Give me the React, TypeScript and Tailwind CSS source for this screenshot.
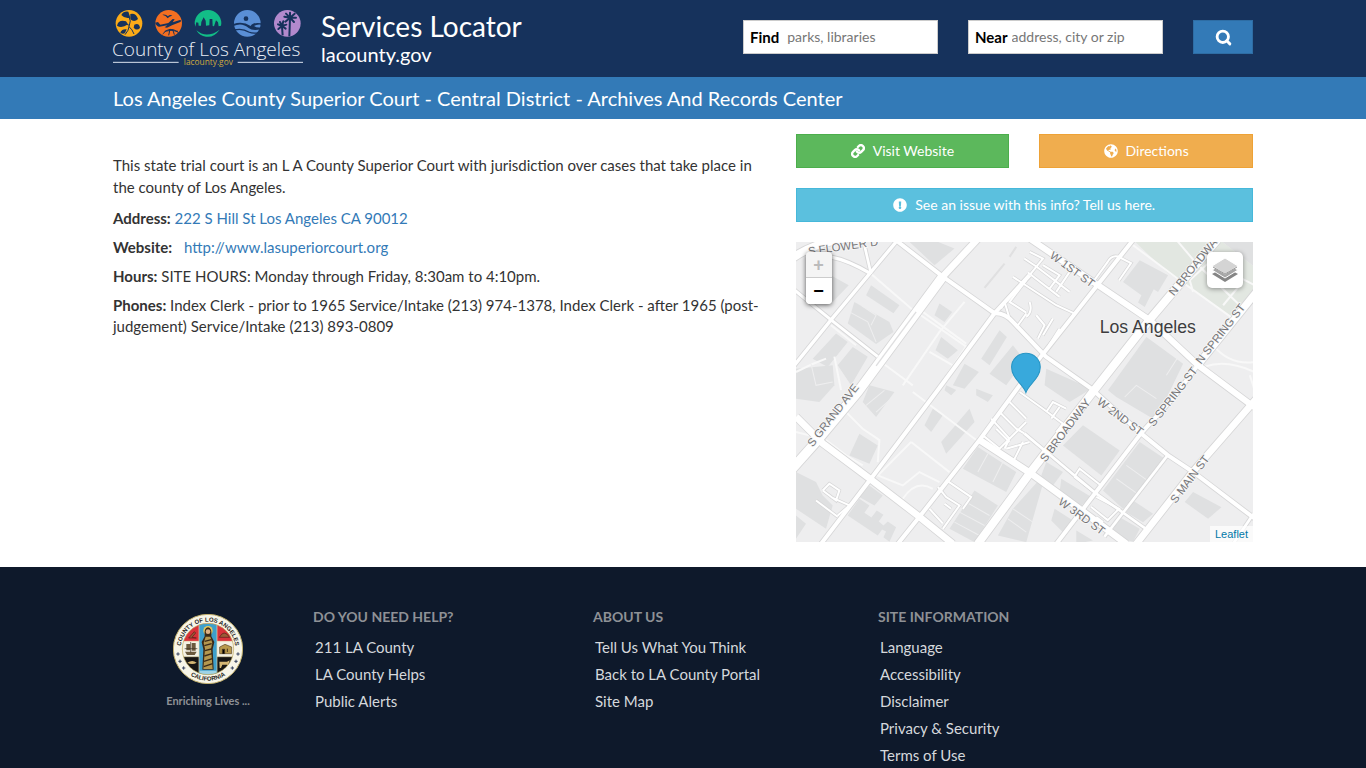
import React from "react";
import { Link as LinkIcon, Search } from "lucide-react";
import { FaGlobeAmericas, FaExclamationCircle } from "react-icons/fa";

const roads: { d: string; w: number }[] = [
  { d: "M-10 48 Q60 0 170 -14", w: 24 },
  { d: "M100 44 Q160 56 225 96", w: 10 },
  { d: "M205 10 L225 96", w: 8 },
  { d: "M305 -6 L105 234 L-5 370", w: 10 },
  { d: "M700 100 L595 214 L425 444 L225 709 L75 905", w: 12 },
  { d: "M1009 -4 L734 344 L660 444 L550 594 L370 824 L305 905", w: 12 },
  { d: "M1204 369 L1134 464 L1034 574 L780 905", w: 12 },
  { d: "M285 -16 L440 104 L595 214 Q625 212 650 240 L749 344 L884 439 L1034 574 L1114 639 L1189 689 L1374 829", w: 12 },
  { d: "M-5 144 L105 234 L245 344", w: 9 },
  { d: "M684 574 L899 754 L1054 864", w: 8 },
  { d: "M1114 639 L924 884", w: 8 },
  { d: "M1371 815 L1310 905", w: 8 },
  { d: "M0 524 L80 604 L220 709 L370 824 L470 905", w: 20 },
  { d: "M550 594 L704 694 L814 774 L990 905", w: 20 },
  { d: "M700 -10 L904 129 L1059 234 L1204 369 L1374 496", w: 18 },
  { d: "M1380 150 L1204 369", w: 22 },
  { d: "M1380 470 L1189 689 L1020 905", w: 20 },
  { d: "M1262 -6 L1059 234 L894 444 L704 689 L545 905", w: 24 },
  { d: "M570 -36 L440 104", w: 20 },
  { d: "M440 104 L185 450 L60 600 L-20 690", w: 28 },
];

const lanes = [
  "M884 129 L934 60 Q945 40 965 44 L1004 64 L968 116",
  "M684 50 L720 74 L820 150 M695 92 L790 165 M700 30 L740 50 L700 100 M740 70 L790 100 L760 140 M820 90 L780 150",
  "M650 105 L780 190 L835 215 M700 180 Q710 210 690 225 M720 220 L745 250 L725 290 M770 230 L740 280 M790 260 L758 310",
  "M690 115 L640 180 L690 212 M625 180 L640 230 M665 250 L690 215 M615 200 L625 180",
  "M610 510 L660 560 L684 574 M640 480 L690 530 M585 530 L640 590 L625 620 M600 560 L640 600 M560 580 L610 620 L690 540",
  "M670 450 L740 500 L800 545 L780 570 M750 510 L770 480 L810 500 M765 530 L790 495 M680 600 L650 660 M630 620 L700 600",
  "M60 775 L125 824 M80 745 L100 725 L130 745 L120 775 L80 745 M105 765 L160 790 M160 790 L125 820",
  "M450 714 L525 765 L500 800 M425 734 L450 765 L490 790 L440 860 M400 800 L440 844 M445 785 L465 800",
  "M834 704 L850 680 L914 730 M834 704 L899 754 M884 794 L934 834 L968 800 L900 764 M900 825 L920 840",
];

const paths = [
  "M225 96 L345 200 L510 314 L430 430",
  "M505 180 L430 270 L320 430 M380 210 L510 305 M260 364 L350 430 M400 330 L470 370",
  "M105 250 L180 310 M115 344 L135 444 M0 390 L50 366 L90 350",
  "M150 510 L200 560 L250 594 L245 660 M345 600 L460 690 M345 600 L245 700 L320 730 L370 690 L430 720 M320 770 Q360 710 410 740",
  "M350 450 L540 594 M90 594 L150 640 L200 670 M0 570 L40 580",
  "M1010 10 L1150 115 L1310 230 M1140 -6 L1200 65 L1330 190 M1180 115 L1240 60 L1374 130 M1180 115 L1190 150 M1280 190 L1330 130",
  "M1225 374 Q1290 350 1374 390 M1250 310 Q1300 370 1374 360 M1360 400 L1374 444",
];

const buildings = [
  "M95 95 L158 130 L110 180 L80 160Z",
  "M225 130 L310 190 L292 214 L210 160Z",
  "M175 180 L280 240 L292 270 L240 306 L155 245Z",
  "M120 275 L155 300 L95 375 L50 350Z M170 315 L215 344 L165 430 L125 370Z",
  "M0 380 L110 370 L115 430 L70 480 L0 470Z",
  "M340 0 L410 -6 L475 20 L415 70Z",
  "M430 185 L468 210 L445 240 L415 220Z M435 285 L485 325 L455 350 L418 325Z",
  "M610 265 L632 285 L580 370 L555 350Z M505 365 L548 390 L505 440 L470 430Z M650 310 L685 355 L630 430 L580 395Z",
  "M220 430 L295 450 L240 525 L200 480Z M190 575 L245 610 L220 665 L160 640Z",
  "M410 500 L440 520 L405 570 L385 550Z M520 500 L535 540 L450 635 L435 600Z",
  "M540 440 L590 460 L575 480 L540 460Z M450 430 L480 444 L465 460 L445 445Z",
  "M545 615 L660 690 L630 750 L500 680Z M535 745 L605 790 L535 900 L460 860Z",
  "M0 690 L60 720 L80 760 L110 790 L90 860 L0 800Z",
  "M220 730 L260 760 L235 790 L190 765Z M190 770 L220 790 L205 812 L226 826 L242 805 L262 818 L248 838 L262 850 L275 838 L300 855 L280 899 L262 885 L270 868 L258 862 L245 880 L155 820Z",
  "M0 820 L30 845 L0 890Z M650 800 L750 690 L690 900 L605 880Z",
  "M1030 55 L1115 100 L1085 150 L1072 142 L1045 195 L1025 182 L1035 160 L980 120Z M1270 -6 L1374 -6 L1374 75Z",
  "M1050 285 L1160 365 L1100 490 L1070 530 L960 465 L935 445Z",
  "M860 550 L970 625 L915 700 L800 610Z",
  "M1030 600 L1105 650 L980 800 L920 745Z M1010 775 L1070 815 L1040 840 L990 810Z M970 825 L1030 860 L1010 899 L940 880Z",
  "M1190 750 L1275 795 L1235 830 L1165 780Z",
  "M750 660 L800 690 L770 730 L735 700Z M795 710 L885 765 L855 790 L790 750Z M750 380 L885 440 L820 480 L745 430Z",
  "M775 800 L830 835 L800 870 L765 835Z M840 865 L890 895 L840 905Z",
];

const streetLabels = [
  { text: "S FLOWER D", x: 38, y: 40, angle: -8 },
  { text: "S GRAND AVE", x: 50, y: 616, angle: -52 },
  { text: "W 1ST ST", x: 758, y: 46, angle: 36 },
  { text: "N BROADWAY", x: 1133, y: 164, angle: -51 },
  { text: "N SPRING ST", x: 1214, y: 368, angle: -52 },
  { text: "S SPRING ST", x: 1072, y: 556, angle: -52 },
  { text: "W 2ND ST", x: 900, y: 484, angle: 37 },
  { text: "S BROADWAY", x: 748, y: 662, angle: -53 },
  { text: "S MAIN ST", x: 1138, y: 786, angle: -53 },
  { text: "W 3RD ST", x: 784, y: 784, angle: 36 },
];

const footerColumns = [
  {
    title: "DO YOU NEED HELP?",
    links: ["211 LA County", "LA County Helps", "Public Alerts"],
  },
  {
    title: "ABOUT US",
    links: ["Tell Us What You Think", "Back to LA County Portal", "Site Map"],
  },
  {
    title: "SITE INFORMATION",
    links: ["Language", "Accessibility", "Disclaimer", "Privacy & Security", "Terms of Use"],
  },
];

function CountyLogo() {
  return (
    <svg viewBox="39 30 570 171" className="w-[190px] h-[57px] shrink-0 overflow-visible" role="img" aria-label="County of Los Angeles">
      {/* Poppy */}
      <circle cx="87" cy="70" r="40" fill="#fbab18" />
      <g fill="#16325c">
        <path d="M64 45 Q70 33 85 35 L91 53 Q74 57 64 45Z" />
        <path d="M91 42 Q108 38 114 57 Q103 68 91 58Z" />
        <path d="M51 77 Q55 58 78 64 L84 73 Q65 86 51 77Z" />
        <path d="M103 74 Q118 68 120 84 Q110 94 101 83Z" />
        <path d="M61 98 Q66 86 80 88 L75 99 Q69 104 61 98Z" />
      </g>
      <path d="M87 51 Q94 62 88 76 Q87 91 75 104 M88 76 Q79 70 68 73 M87 80 Q97 88 102 102" fill="none" stroke="#16325c" strokeWidth="3" />
      {/* Airport */}
      <circle cx="206" cy="70" r="40" fill="#f36f21" />
      <path d="M187 44 Q198 42 204 49 Q209 42 217 47 Q209 48 203 55 Q198 46 187 44Z" fill="#16325c" />
      <path d="M165 68 L174 66 L181 74 L205 69 L218 57 L224 58 L218 67 L240 60 Q246 62 241 66 L216 76 L201 83 L194 82 L202 76 L178 80 Q170 79 165 68Z" fill="#16325c" />
      <path d="M188 102 Q208 76 236 98 M194 94 Q212 88 234 94 M210 88 L206 106 M218 88 L223 104" fill="none" stroke="#16325c" strokeWidth="3" />
      {/* Skyline */}
      <path d="M284 70 A40 40 0 0 1 364 70 L363 77 L356 79 L354 67 L348 61 L342 79 L338 78 L337 57 L329 57 L328 76 L318 77 L317 62 L311 52 L304 66 L303 77 L296 77 L295 68 L289 67 L286 80Z" fill="#12bd87" />
      <path d="M289 91 Q320 117 359 89 Q341 114 318 110 Q299 108 289 91Z" fill="#12bd87" />
      {/* Ocean */}
      <circle cx="442" cy="70" r="40" fill="#5a8fd6" />
      <circle cx="438" cy="56" r="7" fill="#16325c" />
      <path d="M400 78 Q426 66 446 84 Q456 94 484 88 L484 82 Q470 84 462 78 Q470 72 484 74 L484 70 Q458 66 452 78 Q428 62 400 72Z" fill="#16325c" />
      <path d="M402 90 Q428 84 446 96 Q460 102 476 98" fill="none" stroke="#16325c" strokeWidth="4" />
      {/* Palms */}
      <circle cx="562" cy="70" r="40" fill="#b289cd" />
      <path d="M570 55 L568 109 M546 80 L548 106" fill="none" stroke="#16325c" strokeWidth="6" />
      <path d="M570 53 L553 50 M570 53 L558 41 M570 53 L570 38 M570 53 L584 41 M570 53 L588 53 M570 53 L582 66 M570 53 L556 65 M546 78 L534 73 M546 78 L540 66 M546 78 L550 64 M546 78 L559 74 M546 78 L557 86 M546 78 L535 87" stroke="#16325c" strokeWidth="6" strokeLinecap="round" />
      <text x="36" y="167" fontSize="57" fontWeight="300" fill="#e9eef6" fontFamily="'Open Sans', 'Noto Sans', sans-serif">
        County of Los Angeles
      </text>
      <path d="M39 187 H236 M413 187 H609" stroke="#dbe3ef" strokeWidth="3" />
      <text x="325" y="195" fontSize="25" textAnchor="middle" fill="#cfa93d" fontFamily="'Open Sans', 'Noto Sans', sans-serif">
        lacounty.gov
      </text>
    </svg>
  );
}

function CountySeal() {
  return (
    <svg viewBox="69 41 210 210" className="size-[70px]" role="img" aria-label="Seal of the County of Los Angeles, California">
      <defs>
        <path id="seal-top" d="M92 146 A82 82 0 0 1 256 146" />
        <path id="seal-bottom" d="M79 146 A95 95 0 0 0 269 146" />
        <clipPath id="seal-inner">
          <circle cx="174" cy="146" r="77" />
        </clipPath>
      </defs>
      <circle cx="174" cy="146" r="104" fill="#f7f5e8" stroke="#c3b06b" strokeWidth="3" />
      <g clipPath="url(#seal-inner)">
        <rect x="97" y="69" width="154" height="54" fill="#d8323a" />
        <rect x="97" y="123" width="154" height="46" fill="#f4f1e4" />
        <rect x="97" y="169" width="154" height="54" fill="#171513" />
        <rect x="147" y="69" width="54" height="154" fill="#3e9fcb" stroke="#e8dcb0" strokeWidth="2" />
        <path d="M97 123 H147 M201 123 H251 M97 169 H147 M201 169 H251" stroke="#e8dcb0" strokeWidth="2" />
        <rect x="149" y="211" width="50" height="12" fill="#9ed3e6" />
        {/* Figure of Pomona */}
        <circle cx="174" cy="91" r="14" fill="#e4c65b" />
        <path d="M164 108 Q161 82 174 81 Q187 82 184 108 L193 125 L188 147 L191 208 L157 208 L160 147 L155 125Z" fill="#3b2a18" />
        <path d="M167 109 H181 L187 128 L183 145 L188 206 L160 206 L165 145 L161 128Z" fill="#b4974e" />
        <path d="M164 123 L184 118 M163 136 L185 130 M165 151 L184 146 M163 167 L186 160 M162 183 L187 175 M161 199 L188 190" stroke="#3b2a18" strokeWidth="4" />
        <circle cx="174" cy="94" r="7" fill="#dcb184" />
        {/* Side panels */}
        <path d="M116 113 L133 94 L137 98 L126 111 L139 113Z M208 111 Q222 85 239 111Z" fill="#9a5b36" stroke="#5a1a19" strokeWidth="2" />
        <path d="M105 154 H140 L134 164 H111Z M109 131 H121 V150 H109Z M125 128 H137 V151 H125Z" fill="#6b5a3d" />
        <path d="M104 145 H142 M122 125 V156" stroke="#3a2f20" strokeWidth="2" />
        <path d="M209 140 L225 132 L245 140 V160 H209Z" fill="#b99a4d" stroke="#5a4526" strokeWidth="2" />
        <path d="M217 160 V147 H224 V160 M232 145 V155" stroke="#46351d" strokeWidth="3" />
        <path d="M112 187 Q127 177 140 187 Q127 195 112 187Z M208 184 H231 L239 180 L236 190 V201 H232 V193 H217 L213 203 H209Z" fill="#d6b773" />
      </g>
      <circle cx="174" cy="146" r="77" fill="none" stroke="#bda75a" strokeWidth="2" />
      <g fontFamily="'Liberation Sans', Arial, sans-serif" fontWeight="700" fontSize="18" fill="#26241c">
        <text textAnchor="middle"><textPath href="#seal-top" startOffset="50%">COUNTY OF LOS ANGELES</textPath></text>
        <text textAnchor="middle"><textPath href="#seal-bottom" startOffset="50%">CALIFORNIA</textPath></text>
      </g>
      <path d="M84 156 V166 M79 161 H89 M90 178 V188 M85 183 H95 M101 198 V208 M96 203 H106 M264 156 V166 M259 161 H269 M258 178 V188 M253 183 H263 M247 198 V208 M242 203 H252" stroke="#34415f" strokeWidth="3" />
    </svg>
  );
}

function StreetMap() {
  return (
    <svg viewBox="0 0 1371 900" preserveAspectRatio="xMidYMid slice" className="block w-full h-full" role="img" aria-label="Street map of downtown Los Angeles">
      <rect width="1371" height="900" fill="#eeeeef" />
      <path d="M1010 -6 L1270 -6 L1374 75 L1374 160 L1310 230 L1190 145 L1110 90Z" fill="#e2e7e1" />
      <path d="M660 15 L640 45 M625 65 L565 138" stroke="#e0e0e1" strokeWidth="6" />
      <g fill="#dfe0e1">
        {buildings.map((d) => <path key={d} d={d} />)}
      </g>
      <g fill="none" stroke="#f8f8f8" strokeWidth="6">
        {paths.map((d) => <path key={d} d={d} />)}
      </g>
      <g fill="none" stroke="#eeeeef" strokeWidth="3">
        <path d="M160 210 L215 240 L240 300 M195 190 L240 220 L225 250 M45 366 L60 430 L110 420 M210 490 L265 445 M240 510 L285 470" />
        <path d="M575 635 L545 690 M620 660 L590 720 M510 780 L580 820 M490 810 L565 850 M475 840 L550 880 M650 800 L710 840 M635 830 L690 870" />
        <path d="M985 465 L1020 430 L1080 470 M1080 620 L1040 600 M1060 720 L990 670 M1030 760 L960 710 M1110 400 L1145 345" />
      </g>
      <g fill="none" stroke="#d6d6d7">
        {lanes.map((d) => <path key={d} d={d} strokeWidth="10" />)}
        {roads.map((r) => <path key={r.d} d={r.d} strokeWidth={r.w + 5} />)}
      </g>
      <g fill="none" stroke="#fff">
        {lanes.map((d) => <path key={d} d={d} strokeWidth="6" />)}
        {roads.map((r) => <path key={r.d} d={r.d} strokeWidth={r.w} />)}
      </g>
      <path d="M360 210 L240 372" stroke="#dededf" strokeWidth="4" />
      <g fontFamily="'Liberation Sans', Arial, sans-serif" fontSize="34" fill="#757577" stroke="#f7f7f7" strokeWidth="5" paintOrder="stroke">
        {streetLabels.map((l) => (
          <text key={l.text} transform={`translate(${l.x} ${l.y}) rotate(${l.angle})`}>{l.text}</text>
        ))}
      </g>
      <text x="910" y="273" fontSize="53" fill="#3d3d3f" stroke="#f3f3f3" strokeWidth="5" paintOrder="stroke" fontFamily="'Liberation Sans', Arial, sans-serif">
        Los Angeles
      </text>
      <path d="M689 452 C680 425 646 410 646 375 A43 41 0 0 1 732 375 C732 410 698 425 689 452Z" fill="#38a9dc" stroke="#2795c4" strokeWidth="3" />
    </svg>
  );
}

function LayersIcon() {
  return (
    <svg viewBox="0 0 26 26" className="size-[26px]" aria-hidden="true">
      <path d="M0 17 L13 10 L26 17 L13 25Z" fill="#858585" />
      <path d="M0 13 L13 6 L26 13 L13 21Z" fill="#a6a6a6" stroke="#fff" />
      <path d="M0 9 L13 1 L26 9 L13 17Z" fill="#d4d4d4" stroke="#fff" />
      <path d="M1 10 L13 17 L25 10" fill="none" stroke="#999" />
    </svg>
  );
}

export default function App() {
  return (
    <div className="min-h-screen flex flex-col bg-white text-[#333] text-[15px] leading-[21px] font-[Lato,sans-serif]">
      {/* Header */}
      <header className="bg-[#16325c] text-white">
        <div className="w-full max-w-[1170px] mx-auto px-[15px] h-[77px] flex items-start">
          <a href="#home" className="mt-[10px]">
            <CountyLogo />
          </a>
          <div className="ml-[18px] mt-[10px] flex-1">
            <h1 className="text-[28px] leading-8">Services Locator</h1>
            <p className="text-xl leading-6">lacounty.gov</p>
          </div>
          <form className="mt-5 flex gap-[30px]" onSubmit={(e) => e.preventDefault()}>
            <div className="w-[195px] h-[34px] px-[6px] flex items-center gap-2 bg-white border border-[#ccc]">
              <label htmlFor="find" className="font-bold text-black">Find</label>
              <input id="find" type="text" placeholder="parks, libraries" className="min-w-0 flex-1 text-sm text-[#555] placeholder:text-[#777] outline-none" />
            </div>
            <div className="w-[195px] h-[34px] px-[6px] flex items-center gap-1 bg-white border border-[#ccc]">
              <label htmlFor="near" className="font-bold text-black">Near</label>
              <input id="near" type="text" placeholder="address, city or zip" className="min-w-0 flex-1 text-sm text-[#555] placeholder:text-[#777] outline-none" />
            </div>
            <button type="submit" aria-label="Search" className="w-[60px] h-[34px] flex items-center justify-center bg-[#337ab7] border border-[#2e6da4]">
              <Search size={17} strokeWidth={4} />
            </button>
          </form>
        </div>
      </header>

      {/* Page title */}
      <div className="bg-[#337ab7] text-white">
        <h2 className="w-full max-w-[1170px] mx-auto px-[15px] text-xl leading-[42px]">
          Los Angeles County Superior Court - Central District - Archives And Records Center
        </h2>
      </div>

      <main className="w-full max-w-[1170px] mx-auto px-[15px] pt-[15px] pb-[25px] grid grid-cols-12 gap-x-[30px]">
        {/* Service details */}
        <section className="col-span-7 pt-5 flex flex-col gap-2">
          <p className="leading-[22px] mb-[2px]">
            This state trial court is an L A County Superior Court with jurisdiction over cases that take place in the county of Los Angeles.
          </p>
          <p>
            <strong>Address:</strong> <a href="#directions" className="text-[#337ab7]">222 S Hill St Los Angeles CA 90012</a>
          </p>
          <p>
            <strong className="mr-2">Website:</strong> <a href="#website" className="text-[#337ab7]">http://www.lasuperiorcourt.org</a>
          </p>
          <p>
            <strong>Hours:</strong> SITE HOURS: Monday through Friday, 8:30am to 4:10pm.
          </p>
          <p>
            <strong>Phones:</strong> Index Clerk - prior to 1965 Service/Intake (213) 974-1378, Index Clerk - after 1965 (post-judgement) Service/Intake (213) 893-0809
          </p>
        </section>

        {/* Actions and map */}
        <aside className="col-span-5 flex flex-col gap-5">
          <div className="grid grid-cols-2 gap-[30px] text-sm text-white">
            <a href="#website" className="h-[34px] flex items-center justify-center gap-2 bg-[#5cb85c] border border-[#4cae4c]">
              <LinkIcon size={14} strokeWidth={4} /> Visit Website
            </a>
            <a href="#directions" className="h-[34px] flex items-center justify-center gap-2 bg-[#f0ad4e] border border-[#eea236]">
              <FaGlobeAmericas /> Directions
            </a>
          </div>
          <a href="#feedback" className="h-[34px] flex items-center justify-center gap-2 bg-[#5bc0de] border border-[#46b8da] text-sm text-white">
            <FaExclamationCircle /> See an issue with this info? Tell us here.
          </a>
          <div className="relative h-[300px] overflow-hidden">
            <StreetMap />
            <div className="absolute top-[10px] left-[10px] w-[26px] rounded-sm overflow-hidden shadow-[0_1px_5px_rgba(0,0,0,0.65)] font-['Liberation_Sans',sans-serif] font-bold text-lg">
              <button type="button" aria-label="Zoom in" className="block w-full h-[26px] leading-[26px] bg-[#f4f4f4] text-[#bbb] border-b border-[#ccc]">+</button>
              <button type="button" aria-label="Zoom out" className="block w-full h-[26px] leading-[26px] bg-white text-black">−</button>
            </div>
            <button type="button" aria-label="Layers" className="absolute top-[10px] right-[10px] size-9 flex items-center justify-center bg-white rounded-[5px] shadow-[0_1px_5px_rgba(0,0,0,0.4)]">
              <LayersIcon />
            </button>
            <a href="#leaflet" className="absolute bottom-0 right-0 px-[5px] leading-4 bg-white/70 text-[#0078a8] text-[11px] font-['Liberation_Sans',sans-serif]">
              Leaflet
            </a>
          </div>
        </aside>
      </main>

      {/* Footer */}
      <footer className="flex-1 bg-[#0e192b]">
        <div className="w-full max-w-[1170px] mx-auto px-[15px] pt-10 grid grid-cols-[200fr_280fr_285fr_375fr]">
          <div className="pt-[7px] pr-[10px] flex flex-col items-center gap-2">
            <CountySeal />
            <p className="text-[11px] leading-[18px] font-bold text-[#8e9196]">Enriching Lives ...</p>
          </div>
          {footerColumns.map((col) => (
            <nav key={col.title} aria-label={col.title}>
              <h3 className="text-sm leading-5 font-bold text-[#8e9196]">{col.title}</h3>
              <ul className="mt-[7px] pl-[2px] leading-[27px] text-[#d5d8dc]">
                {col.links.map((link) => (
                  <li key={link}><a href="#footer">{link}</a></li>
                ))}
              </ul>
            </nav>
          ))}
        </div>
      </footer>
    </div>
  );
}
